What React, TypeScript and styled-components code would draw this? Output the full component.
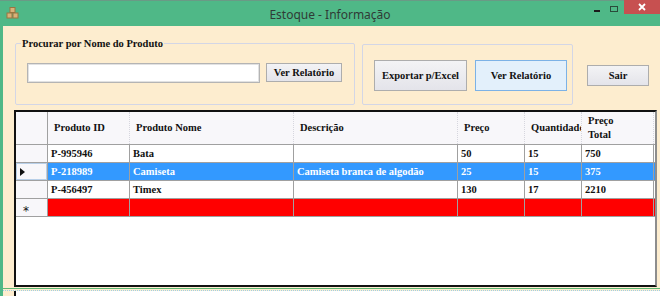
import React, {FC} from 'react';
import styled, {createGlobalStyle} from 'styled-components';

interface Produto {
    id: string;
    nome: string;
    descricao: string;
    preco: string;
    quantidade: string;
    total: string;
}

const produtos: Produto[] = [
    {id: 'P-995946', nome: 'Bata', descricao: '', preco: '50', quantidade: '15', total: '750'},
    {id: 'P-218989', nome: 'Camiseta', descricao: 'Camiseta branca de algodão', preco: '25', quantidade: '15', total: '375'},
    {id: 'P-456497', nome: 'Timex', descricao: '', preco: '130', quantidade: '17', total: '2210'},
];

const colunas = [
    {titulo: 'Produto ID', largura: 82},
    {titulo: 'Produto Nome', largura: 164},
    {titulo: 'Descrição', largura: 164},
    {titulo: 'Preço', largura: 67},
    {titulo: 'Quantidade', largura: 57},
    {titulo: 'Preço Total', largura: 72},
];

const GlobalStyle = createGlobalStyle`
    html, body {
        margin: 0;
        padding: 0;
        width: 660px;
        height: 296px;
        overflow: hidden;
        background: #fdedcf;
    }
    * { box-sizing: border-box; }
`;

const App: FC = () => {
    const selecionado = 1;

    return (
        <Janela>
            <GlobalStyle />
            <TitleBar>
                <AppIcon width="14" height="14" viewBox="0 0 14 14">
                    <rect x="4" y="0.5" width="5" height="5" fill="#d8b27a" stroke="#9a7440" />
                    <rect x="1" y="6" width="5" height="5" fill="#d8b27a" stroke="#9a7440" />
                    <rect x="7" y="6" width="5" height="5" fill="#d8b27a" stroke="#9a7440" />
                </AppIcon>
                <Title>Estoque - Informação</Title>
                <Controls>
                    <CtrlButton>
                        <svg width="8" height="8" viewBox="0 0 8 8">
                            <rect x="1" y="5" width="6" height="2" fill="#1a1a1a" />
                        </svg>
                    </CtrlButton>
                    <CtrlButton>
                        <svg width="10" height="8" viewBox="0 0 10 8">
                            <rect x="1.5" y="1.5" width="7" height="5" fill="none" stroke="#2a4a3a" />
                        </svg>
                    </CtrlButton>
                    <CloseButton>
                        <svg width="10" height="10" viewBox="0 0 10 10">
                            <path d="M2 2 L8 8 M8 2 L2 8" stroke="#fff" strokeWidth="1.8" />
                        </svg>
                    </CloseButton>
                </Controls>
            </TitleBar>

            <Corpo>
                <TopRow>
                    <SearchGroup>
                        <Legend>Procurar por Nome do Produto</Legend>
                        <SearchRow>
                            <SearchInput />
                            <SmallButton>Ver Relatório</SmallButton>
                        </SearchRow>
                    </SearchGroup>
                    <ActionsGroup>
                        <BigButton>Exportar p/Excel</BigButton>
                        <BigButton $focused>Ver Relatório</BigButton>
                    </ActionsGroup>
                    <SairButton>Sair</SairButton>
                </TopRow>

                <Grid>
                    <HeaderRow>
                        <RowHeaderCell $header />
                        {colunas.map((c) => (
                            <HeaderCell key={c.titulo} style={{width: c.largura}} $wrap={c.titulo === 'Preço Total'}>
                                {c.titulo}
                            </HeaderCell>
                        ))}
                    </HeaderRow>
                    {produtos.map((p, i) => (
                        <Row key={p.id} $selected={i === selecionado}>
                            <RowHeaderCell $current={i === selecionado}>
                                {i === selecionado && <Arrow />}
                            </RowHeaderCell>
                            {[p.id, p.nome, p.descricao, p.preco, p.quantidade, p.total].map((v, j) => (
                                <Cell key={j} style={{width: colunas[j].largura}}>{v}</Cell>
                            ))}
                        </Row>
                    ))}
                    <Row $novo>
                        <RowHeaderCell>
                            <Star>*</Star>
                        </RowHeaderCell>
                        {colunas.map((c) => (
                            <Cell key={c.titulo} style={{width: c.largura}} />
                        ))}
                    </Row>
                </Grid>

                <BottomRule />
                <Lower>
                    <LowerBox />
                </Lower>
            </Corpo>
        </Janela>
    );
};

const Janela = styled.div`
    width: 660px;
    height: 296px;
    display: flex;
    flex-direction: column;
    background: #4fb887;
    overflow: hidden;
`;

const TitleBar = styled.div`
    height: 26px;
    flex-shrink: 0;
    display: flex;
    align-items: flex-start;
    position: relative;
    border-top: 1px solid #6a9a86;
`;

const AppIcon = styled.svg`
    margin: 6px 0 0 6px;
`;

const Title = styled.div`
    position: absolute;
    left: 0;
    right: 0;
    top: 5px;
    text-align: center;
    font-family: "Noto Sans", "Open Sans", sans-serif;
    font-size: 12px;
    color: #2f3b36;
    pointer-events: none;
`;

const Controls = styled.div`
    margin-left: auto;
    display: flex;
    align-items: flex-start;
`;

const CtrlButton = styled.div`
    width: 17px;
    height: 13px;
    display: flex;
    align-items: center;
    justify-content: center;
    margin-top: 1px;
`;

const CloseButton = styled.div`
    width: 36px;
    height: 14px;
    margin-left: 2px;
    margin-top: -1px;
    background: #c75050;
    display: flex;
    align-items: center;
    justify-content: center;
`;

const Corpo = styled.div`
    flex: 1;
    margin-left: 3px;
    background: #fdedcf;
    display: flex;
    flex-direction: column;
    padding-top: 18px;
`;

const serif = `
    font-family: "Liberation Serif", "Times New Roman", serif;
    font-weight: bold;
    font-size: 10.5px;
    color: #111;
`;

const TopRow = styled.div`
    display: flex;
    align-items: flex-start;
    padding-left: 12px;
    height: 61px;
`;

const SearchGroup = styled.fieldset`
    margin: -6px 0 0 0;
    padding: 0 0 0 11px;
    width: 340px;
    height: 67px;
    border: 1px solid #d3d6e6;
    border-radius: 2px;
`;

const Legend = styled.legend`
    ${serif};
    padding: 0 1px;
    margin-left: -6px;
`;

const SearchRow = styled.div`
    display: flex;
    align-items: flex-start;
    gap: 6px;
    margin-top: 14px;
`;

const SearchInput = styled.div`
    width: 233px;
    height: 20px;
    background: #fff;
    border: 1px solid #b4b4b4;
    box-shadow: inset 0 0 0 1px #e2e2e2;
`;

const buttonBase = `
    ${serif};
    display: flex;
    align-items: center;
    justify-content: center;
    background: linear-gradient(#f3f3f5, #e4e4ea);
    border: 1px solid #adadad;
`;

const SmallButton = styled.div`
    ${buttonBase};
    width: 76px;
    height: 19px;
`;

const ActionsGroup = styled.div`
    margin-left: 7px;
    width: 211px;
    height: 61px;
    border: 1px solid #d3d6e6;
    border-radius: 2px;
    display: flex;
    align-items: flex-start;
    gap: 8px;
    padding: 15px 0 0 11px;
`;

const BigButton = styled.div<{ $focused?: boolean }>`
    ${buttonBase};
    width: ${({$focused}) => ($focused ? 92 : 93)}px;
    height: 31px;
    ${({$focused}) => $focused && `
        background: #e3f0fb;
        border-color: #7cb2e6;
    `}
`;

const SairButton = styled.div`
    ${buttonBase};
    width: 62px;
    height: 21px;
    margin: 21px 0 0 14px;
`;

const Grid = styled.div`
    margin: 5px 0 0 11px;
    width: 643px;
    height: 177px;
    flex-shrink: 0;
    background: #fff;
    border: 2px solid #111;
    border-right: 2px solid #8d8d8d;
    overflow: hidden;
`;

const HeaderRow = styled.div`
    display: flex;
    height: 33px;
    background: #f8f7fa;
    border-bottom: 1px solid #a0a0a0;
`;

const HeaderCell = styled.div<{ $wrap?: boolean }>`
    ${serif};
    flex-shrink: 0;
    display: flex;
    align-items: center;
    padding-left: 6px;
    line-height: 14px;
    border-right: 1px dotted #d6d6de;
    white-space: ${({$wrap}) => ($wrap ? 'normal' : 'nowrap')};
    overflow: hidden;
    padding-right: ${({$wrap}) => ($wrap ? '28px' : '0')};
`;

const Row = styled.div<{ $selected?: boolean; $novo?: boolean }>`
    display: flex;
    height: 18px;
    border-bottom: 1px solid #a0a0a0;
    background: ${({$selected, $novo}) => ($selected ? '#3399ff' : $novo ? '#ff0000' : '#fff')};
    color: ${({$selected}) => ($selected ? '#fff' : '#111')};
`;

const RowHeaderCell = styled.div<{ $header?: boolean; $current?: boolean }>`
    width: 32px;
    flex-shrink: 0;
    background: #f8f7fa;
    border-right: 1px solid #a0a0a0;
    display: flex;
    align-items: center;
    padding-left: 4px;
    ${({$current}) => $current && `box-shadow: inset 0 0 0 1px #b8cfe8;`}
`;

const Arrow = styled.div`
    width: 0;
    height: 0;
    border-top: 4px solid transparent;
    border-bottom: 4px solid transparent;
    border-left: 5px solid #111;
`;

const Star = styled.span`
    font-family: "DejaVu Sans", sans-serif;
    font-size: 12px;
    line-height: 1;
    color: #111;
    margin: 6px 0 0 3px;
`;

const Cell = styled.div`
    ${serif};
    color: inherit;
    flex-shrink: 0;
    display: flex;
    align-items: center;
    padding-left: 3px;
    white-space: nowrap;
    overflow: hidden;
    border-right: 1px solid #a0a0a0;
`;

const BottomRule = styled.div`
    margin-top: 1px;
    height: 3px;
    border-top: 1px solid #5fb873;
    border-bottom: 1px dotted #9fcfe6;
    flex-shrink: 0;
`;

const Lower = styled.div`
    flex: 1;
    padding-left: 11px;
`;

const LowerBox = styled.div`
    height: 100%;
    background: #fff;
    border-left: 2px solid #111;
`;

export default App;
